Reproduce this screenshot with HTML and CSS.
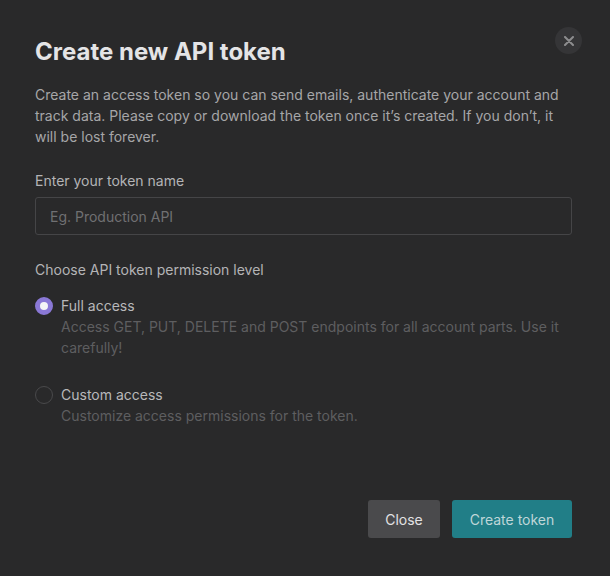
FILE: index.html
```html
<!DOCTYPE html>
<html lang="en">
<head>
    <meta charset="UTF-8">
    <meta name="viewport" content="width=device-width, initial-scale=1.0">
    <title>Create new API token</title>
    <link rel="stylesheet" href="styles.css">
</head>
<body>

<div class="modal">
    <button class="close-x" aria-label="Close">
        <svg width="10" height="10" viewBox="0 0 10 10">
            <path d="M1 1 L9 9 M9 1 L1 9" stroke="#8d8d8f" stroke-width="2" stroke-linecap="round"/>
        </svg>
    </button>

    <h2>Create new API token</h2>
    <p class="intro">Create an access token so you can send emails, authenticate your account and track data. Please copy or download the token once it’s created. If you don’t, it will be lost forever.</p>

    <label class="field-label" for="tokenName">Enter your token name</label>
    <input type="text" id="tokenName" placeholder="Eg. Production API">

    <div class="field-label perm-label">Choose API token permission level</div>

    <div class="option">
        <span class="radio checked"></span>
        <div>
            <div class="option-title">Full access</div>
            <div class="option-desc">Access GET, PUT, DELETE and POST endpoints for all account parts. Use it carefully!</div>
        </div>
    </div>

    <div class="option">
        <span class="radio"></span>
        <div>
            <div class="option-title">Custom access</div>
            <div class="option-desc">Customize access permissions for the token.</div>
        </div>
    </div>

    <div class="actions">
        <button class="btn btn-close">Close</button>
        <button class="btn btn-create">Create token</button>
    </div>
</div>

</body>
</html>
```

FILE: styles.css
```css
body {
    font-family: 'Inter', 'Liberation Sans', sans-serif;
    margin: 0;
    background-color: #29292a;
    height: 576px;
}
.modal {
    position: relative;
    padding: 37px 38px 0 35px;
}
.close-x {
    position: absolute;
    top: 27px;
    right: 28px;
    width: 27px;
    height: 27px;
    border: none;
    border-radius: 50%;
    background-color: #353537;
    display: flex;
    align-items: center;
    justify-content: center;
    padding: 0;
    cursor: pointer;
}
h2 {
    margin: 0;
    color: #e4e4e6;
    font-size: 24px;
    line-height: 30px;
    font-weight: 700;
}
.intro {
    margin: 17px 0 0;
    color: #a6a6a8;
    font-size: 14px;
    line-height: 21px;
}
.field-label {
    display: block;
    margin-top: 24px;
    color: #b4b4b6;
    font-size: 14px;
    line-height: 20px;
}
input[type="text"] {
    display: block;
    box-sizing: border-box;
    width: 100%;
    height: 38px;
    margin-top: 6px;
    padding: 0 14px;
    border: 1px solid #454547;
    border-radius: 3px;
    background-color: #29292a;
    color: #ddd;
    font-family: inherit;
    font-size: 14px;
}
input::placeholder {
    color: #707072;
}
.perm-label {
    margin-top: 25px;
}
.option {
    display: flex;
    gap: 8px;
    margin-top: 16px;
}
.option + .option {
    margin-top: 27px;
}
.radio {
    box-sizing: border-box;
    flex: none;
    width: 18px;
    height: 18px;
    margin-top: 1px;
    border: 1px solid #49494b;
    border-radius: 50%;
}
.radio.checked {
    border: 5px solid #8a78d6;
    background-color: #f4f4f6;
}
.option-title {
    color: #b8b8ba;
    font-size: 14px;
    line-height: 20px;
}
.option-desc {
    color: #5e5e60;
    font-size: 14px;
    line-height: 21px;
}
.actions {
    display: flex;
    justify-content: flex-end;
    gap: 12px;
    margin-top: 74px;
}
.btn {
    height: 38px;
    border: none;
    border-radius: 3px;
    font-family: inherit;
    font-size: 14px;
    cursor: pointer;
}
.btn-close {
    width: 72px;
    background-color: #4a4a4c;
    color: #e2e2e4;
}
.btn-create {
    width: 120px;
    background-color: #217e87;
    color: #bfd6d8;
}
```
